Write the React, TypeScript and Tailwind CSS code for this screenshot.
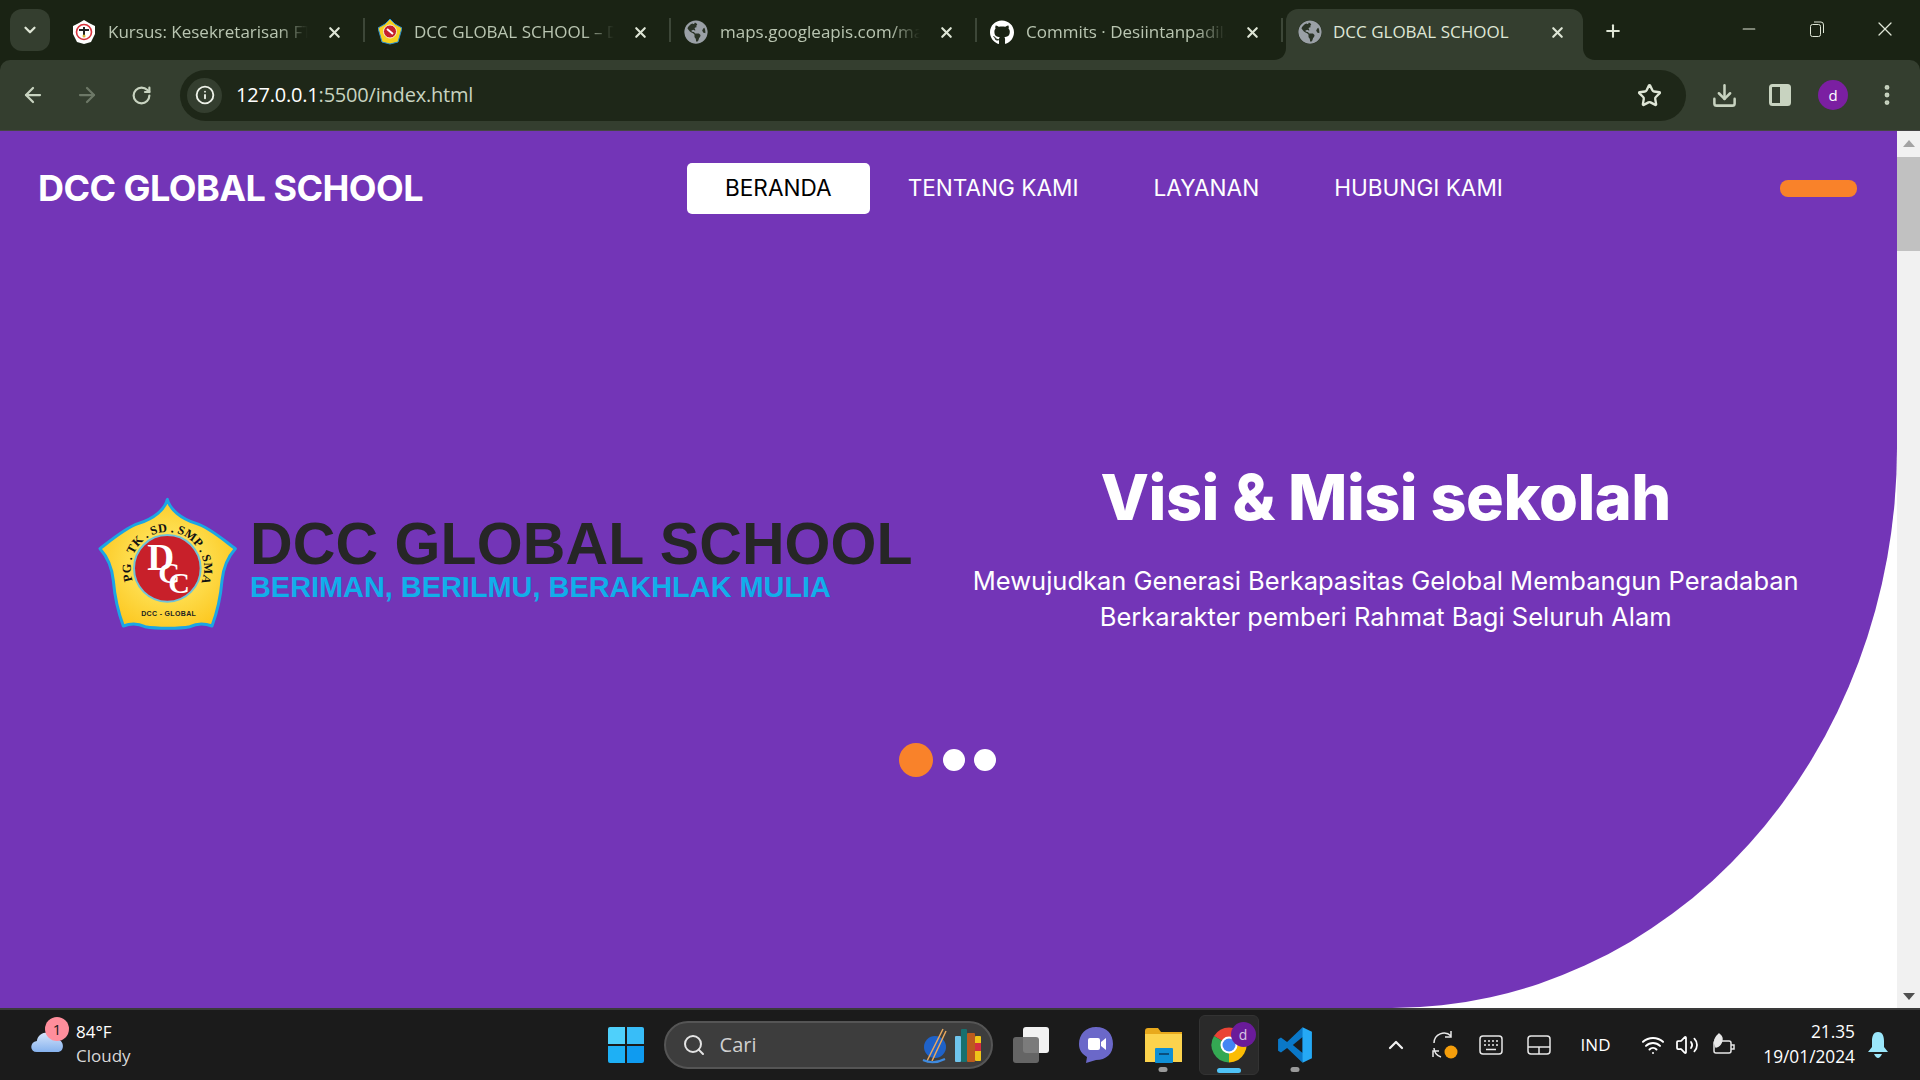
import { ArrowLeft, ArrowRight, ChevronDown, ChevronUp, Download, Info, Minus, MoreVertical, Plus, RotateCw, Search, Star, Volume2, Wifi, X } from "lucide-react"
import { FaGithub, FaGlobeAmericas } from "react-icons/fa"

const uiFont = "font-['Open_Sans','Noto_Sans',sans-serif]"

const SchoolIcon = () => (
  <svg width="24" height="24" viewBox="0 0 24 24">
    <path d="M12 0 L17 3 L23 6 L23 14 L19 22 L12 24 L5 22 L1 14 L1 6 L7 3 Z" fill="#fff" />
    <circle cx="12" cy="12" r="7.5" fill="none" stroke="#d8323c" strokeWidth="1.6" />
    <path d="M7 10 H17 M12 7 V17" stroke="#222" strokeWidth="2" />
    <circle cx="12" cy="16" r="1.5" fill="#d9b53a" />
  </svg>
)

const DccIcon = () => (
  <svg width="24" height="26" viewBox="0 0 24 26">
    <path d="M12 0 L17 5 L24 9 L20 23 L12 25 L4 23 L0 9 L7 5 Z" fill="#f4d01f" stroke="#2a8fd0" />
    <circle cx="12" cy="12.5" r="6.5" fill="#c4202b" stroke="#fff" strokeWidth="0.8" />
    <path d="M9 10 L15 15" stroke="#fff" strokeWidth="2" />
  </svg>
)

const Globe = () => <FaGlobeAmericas className="text-[#9aa0a6] bg-[#2a3326] rounded-full" size={24} />

const tabs = [
  { title: "Kursus: Kesekretarisan FTI UNP", icon: <SchoolIcon /> },
  { title: "DCC GLOBAL SCHOOL – DCC Global", icon: <DccIcon /> },
  { title: "maps.googleapis.com/maps/api/js", icon: <Globe /> },
  { title: "Commits · Desiintanpadila/dcc", icon: <FaGithub className="text-white" size={25} /> },
]

const TabBar = () => (
  <div className="h-[60px] bg-[#1a2314] flex text-[#b9c5b1]">
    <div className="mt-[9px] ml-[10px] w-[40px] h-[42px] bg-[#343e2f] rounded-[12px] flex items-center justify-center mr-[9px]">
      <ChevronDown size={18} strokeWidth={3} className="text-[#dfe6d6]" />
    </div>
    {tabs.map((t) => (
      <div key={t.title} className="mt-[9px] h-[51px] w-[306px] pl-[13px] pb-[5px] flex items-center relative">
        <div className="w-[24px] flex justify-center shrink-0">{t.icon}</div>
        <div className="ml-[12px] w-[200px] whitespace-nowrap overflow-hidden text-[17px] [mask-image:linear-gradient(to_right,black_85%,transparent)]">
          {t.title}
        </div>
        <X size={17} strokeWidth={3} className="ml-[18px] text-[#dfe6d6]" />
        <div className="absolute right-0 top-[9px] w-[2px] h-[24px] bg-[#3d4738]" />
      </div>
    ))}
    <div className="mt-[9px] ml-[3px] h-[51px] w-[297px] pl-[12px] pb-[5px] bg-[#343e2f] rounded-t-[12px] flex items-center relative text-[#dfe6d6]">
      <Globe />
      <div className="ml-[11px] w-[210px] text-[17px] whitespace-nowrap">DCC GLOBAL SCHOOL</div>
      <X size={17} strokeWidth={3} className="ml-[6px]" />
      <svg className="absolute left-[-12px] bottom-0" width="12" height="12" viewBox="0 0 12 12">
        <path d="M12 0 V12 H0 C7 12 12 7 12 0 Z" fill="#343e2f" />
      </svg>
      <svg className="absolute right-[-12px] bottom-0" width="12" height="12" viewBox="0 0 12 12">
        <path d="M0 0 V12 H12 C5 12 0 7 0 0 Z" fill="#343e2f" />
      </svg>
    </div>
    <div className="ml-[20px] mt-[21px] h-[20px]">
      <Plus size={20} strokeWidth={2.5} className="text-[#dfe6d6]" />
    </div>
    <div className="ml-auto flex items-start pt-[19px] text-[#dfe6d6]">
      <Minus size={20} strokeWidth={1.25} />
      <svg className="ml-[49px]" width="18" height="20" viewBox="0 0 18 20" fill="none" stroke="currentColor">
        <rect x="2.5" y="5.5" width="10" height="12" rx="2" />
        <path d="M6 3 H13 Q15.5 3 15.5 6 V14" />
      </svg>
      <X size={24} strokeWidth={1.25} className="ml-[47px] mr-[23px] mt-[-2px]" />
    </div>
  </div>
)

const Toolbar = () => (
  <div className="h-[71px] bg-[#343e2f] border-b border-[#454545] rounded-t-[10px] flex items-center text-[#c8d3c0] relative">
    <ArrowLeft size={24} strokeWidth={2.25} className="ml-[21px]" />
    <ArrowRight size={24} strokeWidth={2.25} className="ml-[30px] text-[#6d7867]" />
    <RotateCw size={21} strokeWidth={2.5} className="ml-[32px]" />
    <div className="ml-[28px] w-[1506px] h-[51px] bg-[#1e2718] rounded-full flex items-center">
      <div className="ml-[7px] w-[35px] h-[35px] rounded-full bg-[#343e2f] flex items-center justify-center">
        <Info size={20} strokeWidth={2.25} className="text-[#eef2e9]" />
      </div>
      <div className={`ml-[14px] text-[20px] tracking-[-0.2px] text-[#c8d3c0] ${uiFont}`}>
        <span className="text-white">127.0.0.1</span>:5500/index.html
      </div>
      <Star size={25} strokeWidth={2.25} className="ml-auto mr-[24px] text-[#dfe6d6]" />
    </div>
    <Download size={27} strokeWidth={2.25} className="ml-[25px]" />
    <svg className="ml-[31px]" width="22" height="22" viewBox="0 0 22 22">
      <rect x="1.5" y="1.5" width="19" height="19" rx="2" fill="none" stroke="#c8d3c0" strokeWidth="3" />
      <rect x="11" y="2" width="9" height="18" fill="#c8d3c0" />
    </svg>
    <div className="ml-[27px] w-[30px] h-[30px] rounded-full bg-[#7b1fa2] text-white text-[15px] flex items-center justify-center">d</div>
    <MoreVertical size={26} strokeWidth={2.5} className="ml-[26px]" />
  </div>
)

const SchoolLogo = () => (
  <svg width="160" height="146" viewBox="0 0 480 438" className="shrink-0">
    <defs>
      <radialGradient id="gold" cx="50%" cy="50%" r="60%">
        <stop offset="0%" stopColor="#fff27a" />
        <stop offset="100%" stopColor="#fcc419" />
      </radialGradient>
      <path id="arc" d="M128 272 A110 110 0 1 1 336 272" />
    </defs>
    <path
      d="M232 28 C225 58 192 86 146 100 C108 112 66 148 30 176 C52 200 66 232 70 272 C74 320 84 365 100 408 C120 400 145 400 165 410 C200 416 268 416 300 410 C320 400 345 400 366 408 C382 365 392 320 396 272 C400 232 414 200 436 176 C398 148 358 112 318 100 C272 86 240 58 232 28 Z"
      fill="url(#gold)"
      stroke="#1ba6e4"
      strokeWidth="9"
      strokeLinejoin="round"
    />
    <circle cx="232" cy="235" r="100" fill="#c8202a" stroke="#6fc3d8" strokeWidth="6" />
    <text x="172" y="240" fontFamily="'Liberation Serif',serif" fontWeight="700" fontSize="112" fill="#fff">D</text>
    <text x="205" y="280" fontFamily="'Liberation Serif',serif" fontWeight="700" fontSize="90" fill="#fff">C</text>
    <text x="235" y="308" fontFamily="'Liberation Serif',serif" fontWeight="700" fontSize="90" fill="#fff">C</text>
    <text fontFamily="'Liberation Serif',serif" fontWeight="700" fontSize="37" fill="#111">
      <textPath href="#arc" textLength="425" lengthAdjust="spacing">PG . TK . SD . SMP . SMA</textPath>
    </text>
    <text x="236" y="378" textAnchor="middle" fontFamily="'Liberation Sans',sans-serif" fontWeight="700" fontSize="21" fill="#222" letterSpacing="1">DCC - GLOBAL</text>
  </svg>
)

const Page = () => (
  <div className="flex-1 flex min-h-0 bg-white">
    <main className="w-[1897px] bg-[#7335b7] rounded-br-[505px_560px] text-white font-['Inter',sans-serif]">
      <nav className="h-[114px] flex items-center pl-[38px] pr-[40px]">
        <div className="w-[649px] text-[36px] font-bold tracking-[-0.55px] whitespace-nowrap">DCC GLOBAL SCHOOL</div>
        <ul className="flex items-center text-[22.6px]">
          <li className="px-[38px] h-[51px] flex items-center bg-white text-black rounded-[5px]">BERANDA</li>
          <li className="px-[38px]">TENTANG KAMI</li>
          <li className="px-[37px]">LAYANAN</li>
          <li className="px-[38px]">HUBUNGI KAMI</li>
        </ul>
        <button className="ml-auto w-[77px] h-[17px] bg-[#f9822a] rounded-[8px]" />
      </nav>

      <section className="mt-[207px] flex items-start">
        <div className="ml-[90px] mt-[38px] flex items-start">
          <SchoolLogo />
          <div className="font-['Liberation_Sans',sans-serif] font-bold whitespace-nowrap">
            <div className="text-[59px] leading-[60px] mt-[24px] text-[#262626] tracking-[0.1px]">DCC GLOBAL SCHOOL</div>
            <div className="text-[28.9px] leading-[30px] mt-[-2px] text-[#11aeea]">BERIMAN, BERILMU, BERAKHLAK MULIA</div>
          </div>
        </div>
        <div className="ml-[33px] w-[880px] text-center">
          <h1 className="text-[63px] leading-[90px] font-extrabold tracking-[-0.5px]">Visi &amp; Misi sekolah</h1>
          <p className="mt-[21px] text-[25.5px] leading-[36px]">
            Mewujudkan Generasi Berkapasitas Gelobal Membangun Peradaban
            <br />
            Berkarakter pemberi Rahmat Bagi Seluruh Alam
          </p>
        </div>
      </section>

      <div className="mt-[107px] flex items-center justify-center pr-[2px]">
        <span className="w-[34px] h-[34px] rounded-full bg-[#f9822a]" />
        <span className="ml-[10px] w-[22px] h-[22px] rounded-full bg-white" />
        <span className="ml-[9px] w-[22px] h-[22px] rounded-full bg-white" />
      </div>
    </main>
    <div className="w-[23px] bg-[#f1f1f1] flex flex-col items-center">
      <div className="mt-[9px] w-0 h-0 border-x-[6px] border-x-transparent border-b-[7px] border-b-[#a3a3a3]" />
      <div className="mt-[10px] w-full h-[94px] bg-[#c1c1c1]" />
      <div className="mt-auto mb-[8px] w-0 h-0 border-x-[6px] border-x-transparent border-t-[7px] border-t-[#505050]" />
    </div>
  </div>
)

const ChromeIcon = () => (
  <svg width="36" height="36" viewBox="0 0 36 36">
    <path d="M18 18 L3 9 A17.5 17.5 0 0 1 33 9 Z" fill="#ea4335" />
    <path d="M18 18 L33 9 A17.5 17.5 0 0 1 18 35.5 Z" fill="#fbbc04" />
    <path d="M18 18 L18 35.5 A17.5 17.5 0 0 1 3 9 Z" fill="#34a853" />
    <circle cx="18" cy="18" r="8.5" fill="#fff" />
    <circle cx="18" cy="18" r="6.5" fill="#4285f4" />
  </svg>
)

const RunningDot = () => (
  <div className="absolute left-1/2 bottom-[-9px] -translate-x-1/2 w-[9px] h-[5px] rounded-full bg-[#9a9a9a]" />
)

const Taskbar = () => (
  <div className={`h-[72px] bg-[#1b1b1b] border-t-2 border-[#3a3a3a] flex items-center text-white ${uiFont}`}>
    <div className="ml-[28px] w-[48px] relative h-[40px]">
      <svg className="absolute left-0 top-[4px]" width="38" height="24" viewBox="0 0 38 26">
        <defs>
          <linearGradient id="cloud" x1="0" y1="0" x2="0" y2="1">
            <stop offset="0%" stopColor="#d5e5fb" />
            <stop offset="100%" stopColor="#86b2ee" />
          </linearGradient>
        </defs>
        <path d="M8 25 C0 25 0 14 8 13 C9 2 26 0 29 11 C38 11 39 25 30 25 Z" fill="url(#cloud)" />
      </svg>
      <div className="absolute left-[17px] top-[-8px] w-[24px] h-[24px] rounded-full bg-[#ff8e9c] text-[#1b1b1b] text-[15px] flex items-center justify-center">1</div>
    </div>
    <div className="text-[17px] leading-[24px] pb-[2px]">
      <div>84°F</div>
      <div className="text-[#d8d8d8]">Cloudy</div>
    </div>
    <div className="ml-[477px] w-[36px] h-[36px] grid grid-cols-2 gap-[2px]">
      <span className="bg-[#4fd0fb] rounded-tl-[2px]" />
      <span className="bg-[#38bdf8] rounded-tr-[2px]" />
      <span className="bg-[#1eb0f5] rounded-bl-[2px]" />
      <span className="bg-[#0f9bf0] rounded-br-[2px]" />
    </div>
    <div className="ml-[20px] w-[329px] h-[48px] bg-[#3d3d3d] border-2 border-[#555] rounded-full flex items-center">
      <Search size={24} strokeWidth={2} className="ml-[16px] text-[#e4e4e4]" />
      <span className="ml-[14px] text-[20px] text-[#d0d0d0]">Cari</span>
      <svg className="ml-auto mr-[2px]" width="70" height="40" viewBox="0 0 70 40">
        <circle cx="16" cy="22" r="11" fill="#1f62c9" />
        <path d="M8 36 L24 4 M13 36 L27 6" stroke="#e9a85f" strokeWidth="1.5" />
        <path d="M4 35 Q14 40 26 34" stroke="#3f8be0" strokeWidth="2" fill="none" />
        <rect x="36" y="11" width="6" height="26" rx="1" fill="#6fc4ec" />
        <rect x="42" y="4" width="6" height="33" rx="1" fill="#17706f" />
        <rect x="48" y="8" width="8" height="29" rx="1" fill="#bb5a1e" />
        <rect x="56" y="11" width="6" height="25" rx="1" fill="#f0c419" />
        <rect x="56" y="18" width="6" height="8" fill="#d32f3f" />
      </svg>
    </div>
    <svg className="ml-[20px]" width="36" height="36" viewBox="0 0 36 36">
      <rect x="10" y="0" width="26" height="26" rx="3" fill="#f2f2f2" />
      <rect x="0" y="10" width="26" height="26" rx="3" fill="#6e6e6e" fillOpacity="0.9" />
    </svg>
    <svg className="ml-[30px]" width="34" height="38" viewBox="0 0 34 38">
      <path d="M17 1 C28 1 34 8 34 18 C34 28 27 34 17 34 L7 37 L8 31 C3 28 0 24 0 18 C0 8 7 1 17 1 Z" fill="#6b68c9" />
      <rect x="9" y="12" width="12" height="12" rx="2" fill="#fff" />
      <path d="M22 16 L27 12 V24 L22 20 Z" fill="#fff" />
    </svg>
    <div className="ml-[32px] relative w-[37px] h-[36px]">
      <svg width="37" height="36" viewBox="0 0 37 36">
        <path d="M0 4 Q0 1 3 1 H13 L16 5 H37 V35 H0 Z" fill="#e8a91c" />
        <rect x="0" y="7" width="37" height="28" fill="#fcd34d" />
        <rect x="10" y="21" width="18" height="15" rx="1" fill="#0f8fd6" />
        <rect x="14" y="26" width="10" height="2" fill="#0a4f7e" />
      </svg>
      <RunningDot />
    </div>
    <div className="ml-[17px] w-[60px] h-[60px] bg-[#2a2a2a] border border-[#333] rounded-[6px] flex items-center justify-center relative">
      <ChromeIcon />
      <div className="absolute left-[31px] top-[6px] w-[25px] h-[25px] rounded-full bg-[#6a1b9a] text-[#d9c6e6] text-[14px] flex items-center justify-center">d</div>
      <div className="absolute left-[17px] bottom-[1px] w-[24px] h-[5px] rounded-full bg-[#4fc3f7]" />
    </div>
    <div className="ml-[18px] relative w-[36px] h-[36px]">
      <svg width="36" height="36" viewBox="0 0 100 100">
        <path d="M71 1 L28 42 L11 29 L3 34 V66 L11 71 L28 58 L71 99 L78 60 V40 Z" fill="#0a78c8" />
        <path d="M71 28 L44 50 L71 72 Z" fill="#1b1b1b" />
        <path d="M71 1 L97 13 V87 L71 99 V72 V28 Z" fill="#25a9f5" />
      </svg>
      <RunningDot />
    </div>
    <ChevronUp size={24} strokeWidth={2.25} className="ml-[71px] text-[#f0f0f0]" />
    <svg className="ml-[23px]" width="28" height="30" viewBox="0 0 28 30" fill="none" stroke="#e8e8e8" strokeWidth="1.5">
      <path d="M3 13 A10 10 0 0 1 20 6 M20 1 V7 H14" />
      <path d="M3 18 A10 10 0 0 0 10 27 M8 21 H2 V27" />
      <circle cx="20" cy="22" r="6.5" fill="#f59e0b" stroke="none" />
    </svg>
    <svg className="ml-[20px]" width="24" height="22" viewBox="0 0 24 22" fill="none" stroke="#e8e8e8" strokeWidth="1.5">
      <rect x="1" y="2" width="22" height="18" rx="3" />
      <path d="M5 7 H7 M9 7 H11 M13 7 H15 M17 7 H19 M5 11 H7 M9 11 H11 M13 11 H15 M17 11 H19 M7 15.5 H17" />
    </svg>
    <svg className="ml-[24px]" width="24" height="22" viewBox="0 0 24 22" fill="none" stroke="#e8e8e8" strokeWidth="1.5">
      <rect x="1" y="2" width="22" height="18" rx="3" />
      <path d="M1 13 H23 M12 13 V20" />
    </svg>
    <span className="ml-[30px] text-[17px]">IND</span>
    <Wifi size={24} strokeWidth={2} className="ml-[31px]" />
    <Volume2 size={24} strokeWidth={1.75} className="ml-[10px]" />
    <svg className="ml-[11px]" width="26" height="26" viewBox="0 0 26 26" fill="none" stroke="#e8e8e8" strokeWidth="1.5">
      <rect x="4" y="9" width="17" height="12" rx="2" />
      <path d="M21 13 H24 V17 H21" />
      <path d="M9 2 C15 6 11 14 6 15 C3 10 5 5 9 2 Z" fill="#e8e8e8" />
    </svg>
    <div className="ml-auto text-[17.3px] leading-[25px] text-right whitespace-nowrap pb-[2px]">
      <div>21.35</div>
      <div>19/01/2024</div>
    </div>
    <svg className="ml-[13px] mr-[32px]" width="20" height="26" viewBox="0 0 20 26">
      <path d="M10 0 C15 0 16 5 16 9 V15 L20 20 H0 L4 15 V9 C4 5 5 0 10 0 Z" fill="#9be7fb" />
      <path d="M6 22 H14 Q12 26 10 26 Q8 26 6 22 Z" fill="#9be7fb" />
    </svg>
  </div>
)

export default function App() {
  return (
    <div className="w-[1920px] h-[1080px] overflow-hidden flex flex-col bg-[#1a2314]">
      <div className={uiFont}>
        <TabBar />
        <Toolbar />
      </div>
      <Page />
      <Taskbar />
    </div>
  )
}
